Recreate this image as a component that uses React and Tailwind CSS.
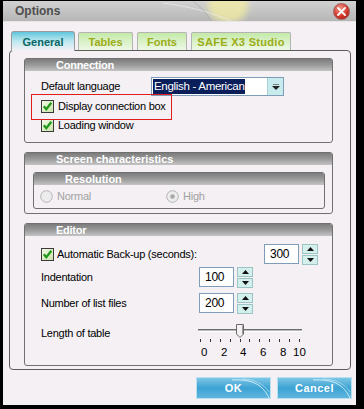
import React from 'react';

const font = { fontFamily: '"Liberation Sans", Arial, sans-serif' };

function CheckBox() {
  return (
    <svg width="13" height="13" viewBox="0 0 13 13" className="shrink-0">
      <defs>
        <linearGradient id="cbg" x1="0" y1="0" x2="1" y2="1">
          <stop offset="0" stopColor="#f4f9e8" />
          <stop offset="1" stopColor="#c9e3a6" />
        </linearGradient>
      </defs>
      <rect x="0.5" y="0.5" width="12" height="12" fill="url(#cbg)" stroke="#3a3a3a" />
      <path d="M2.8 6.2 L5.3 9.2 L10.3 2.8" fill="none" stroke="#1f9a1a" strokeWidth="2.3" />
    </svg>
  );
}

function Radio({ checked }) {
  return (
    <svg width="13" height="13" viewBox="0 0 13 13" className="shrink-0">
      <circle cx="6.5" cy="6.5" r="5.8" fill="#ececec" stroke="#b4b4b4" />
      {checked && <circle cx="6.5" cy="6.5" r="2.2" fill="#a6a6a6" />}
    </svg>
  );
}

function GroupHeader({ children }) {
  return (
    <div className="h-[12px] bg-gradient-to-b from-[#7c7c7c] via-[#9a9a9a] to-[#c4c4c4] pl-[31px] text-[11px] leading-[12px] font-bold text-white">
      {children}
    </div>
  );
}

function Spinner() {
  return (
    <div className="flex flex-col gap-px w-[16px] ml-[3px]">
      <div className="h-[10px] border border-[#9cc4c4] bg-[#d4f0ec] flex items-center justify-center">
        <svg width="7" height="4" viewBox="0 0 7 4"><path d="M0 4 L3.5 0 L7 4 Z" fill="#111" /></svg>
      </div>
      <div className="h-[10px] border border-[#9cc4c4] bg-[#d4f0ec] flex items-center justify-center">
        <svg width="7" height="4" viewBox="0 0 7 4"><path d="M0 0 L7 0 L3.5 4 Z" fill="#111" /></svg>
      </div>
    </div>
  );
}

function NumBox({ value }) {
  return (
    <div className="flex items-center">
      <div className="w-[35px] h-[20px] border border-[#7f9db9] bg-white pl-[5px] text-[12px] leading-[18px] text-black">
        {value}
      </div>
      <Spinner />
    </div>
  );
}

function DialogButton({ label }) {
  return (
    <div className="relative w-[75px] h-[22px] border border-[#b8e0f0] bg-gradient-to-b from-[#7cc6e6] via-[#3aa2d2] to-[#5fb6de] flex items-center justify-center overflow-hidden">
      <svg className="absolute right-0 top-0" width="40" height="22" viewBox="0 0 40 22">
        <path d="M2 2 C20 1 32 5 39 20" fill="none" stroke="#d6f0fa" strokeWidth="1" opacity="0.9" />
        <path d="M12 1 C24 1 34 6 39 14" fill="none" stroke="#ffffff" strokeWidth="0.7" opacity="0.6" />
      </svg>
      <span className="relative text-[11px] font-bold text-white tracking-[0.5px]">{label}</span>
    </div>
  );
}

export default function App() {
  const ticks = [0, 1, 2, 3, 4, 5, 6, 7, 8, 9, 10];
  return (
    <div className="w-[364px] h-[409px] bg-black overflow-hidden pl-[3px] pt-px" style={font}>
      <div className="w-[353px] h-[404px] flex flex-col bg-[#f4f0f4]">
        {/* title bar */}
        <div className="relative h-[21px] shrink-0 bg-gradient-to-b from-[#d2d2d2] to-[#b6b6b6] border-b border-[#e6e6e6] flex items-center overflow-hidden">
          <div className="absolute left-[205px] top-[-14px] w-[40px] h-[36px] rounded-full bg-[#f6f0a0] opacity-70 blur-[3px]" />
          <svg className="absolute left-[160px] top-0" width="90" height="21" viewBox="0 0 90 21">
            <path d="M0 2 C30 6 50 12 70 21" fill="none" stroke="#ececec" strokeWidth="1" opacity="0.7" />
            <path d="M30 0 C40 8 45 14 48 21" fill="none" stroke="#9a9a9a" strokeWidth="0.8" opacity="0.6" />
          </svg>
          <span className="relative ml-[12px] text-[12px] font-bold text-[#4e4e4e]">Options</span>
          <div className="relative ml-auto mr-[6px] w-[17px] h-[17px] rounded-full border border-[#a06060] bg-[radial-gradient(circle_at_40%_30%,#f29a8a,#d2392a_55%,#9e1c14)] flex items-center justify-center">
            <svg width="9" height="9" viewBox="0 0 9 9">
              <path d="M1 1 L8 8 M8 1 L1 8" stroke="#fff" strokeWidth="1.8" strokeLinecap="round" />
            </svg>
          </div>
        </div>

        {/* body */}
        <div className="flex-1 px-[6px] pt-[9px] flex flex-col">
          {/* tabs */}
          <div className="flex items-end h-[19px] ml-[2px] relative z-10">
            <div className="w-[64px] h-[20px] -mb-px rounded-t-[3px] border border-b-0 border-[#9a9a9a] bg-gradient-to-b from-[#5ec6de] via-[#bfe8f0] to-[#f4f0f4] flex items-center justify-center pt-[2px] text-[11px] font-bold text-[#0a6464]">
              General
            </div>
            <div className="ml-[3px] w-[55px] h-[18px] rounded-t-[2px] border border-b-0 border-[#b4b4b4] bg-gradient-to-b from-[#c4eaa8] to-[#eef8e6] flex items-center justify-center pt-[2px] text-[11px] font-bold text-[#9cac16]">
              Tables
            </div>
            <div className="ml-[4px] w-[50px] h-[18px] rounded-t-[2px] border border-b-0 border-[#b4b4b4] bg-gradient-to-b from-[#c4eaa8] to-[#eef8e6] flex items-center justify-center pt-[2px] text-[11px] font-bold text-[#9cac16]">
              Fonts
            </div>
            <div className="ml-[4px] w-[100px] h-[18px] rounded-t-[2px] border border-b-0 border-[#b4b4b4] bg-gradient-to-b from-[#c4eaa8] to-[#eef8e6] flex items-center justify-center pt-[2px] text-[11px] font-bold text-[#9cac16] tracking-[0.3px]">
              SAFE X3 Studio
            </div>
          </div>

          {/* panel */}
          <div className="w-[342px] h-[320px] border border-[#5c5c5c] rounded-[4px] pl-[14px] pt-[7px] flex flex-col">
            {/* Connection */}
            <div className="relative w-[309px] h-[85px] border border-[#707070] rounded-[3px] overflow-visible text-[11px] tracking-[-0.25px] text-black">
              <GroupHeader>Connection</GroupHeader>
              <div className="flex items-center h-[19px] mt-[6px] pl-[16px]">
                <span className="w-[110px]">Default language</span>
                <div className="w-[133px] h-[19px] border border-[#7f9db9] bg-white flex items-center">
                  <span className="ml-px px-px h-[15px] leading-[15px] bg-[#0a1e5a] text-white text-[11.5px] tracking-[-0.3px]">English - American</span>
                  <div className="ml-auto w-[16px] h-[17px] bg-[#c8ecee] border-l border-[#a8d0d4] flex items-center justify-center">
                    <svg width="8" height="6" viewBox="0 0 8 6">
                      <path d="M0 2 L8 2 L4 6 Z" fill="#222" />
                      <path d="M1 0.5 H7" stroke="#666" strokeWidth="0.8" />
                    </svg>
                  </div>
                </div>
              </div>
              <div className="flex items-center gap-[4px] h-[19px] mt-px pl-[16px]">
                <CheckBox />
                <span>Display connection box</span>
              </div>
              <div className="flex items-center gap-[4px] h-[19px] pl-[16px]">
                <CheckBox />
                <span>Loading window</span>
              </div>
              <div className="absolute left-[6px] top-[35px] w-[141px] h-[26px] border border-[#e01c1c]" />
            </div>

            {/* Screen characteristics */}
            <div className="w-[309px] h-[62px] mt-[9px] border border-[#707070] rounded-[3px] overflow-hidden">
              <GroupHeader>Screen characteristics</GroupHeader>
              <div className="ml-[8px] mt-[7px] w-[292px] h-[37px] border border-[#707070] rounded-[3px] overflow-hidden">
                <GroupHeader>Resolution</GroupHeader>
                <div className="flex items-center h-[22px] pl-[6px] text-[11px] tracking-[-0.25px] text-[#a2a2a2]">
                  <div className="flex items-center gap-[4px] w-[126px]">
                    <Radio />
                    <span>Normal</span>
                  </div>
                  <div className="flex items-center gap-[4px]">
                    <Radio checked />
                    <span>High</span>
                  </div>
                </div>
              </div>
            </div>

            {/* Editor */}
            <div className="w-[309px] h-[143px] mt-[9px] border border-[#707070] rounded-[3px] overflow-hidden text-[11px] tracking-[-0.25px] text-black">
              <GroupHeader>Editor</GroupHeader>
              <div className="flex items-center h-[20px] mt-[8px] pl-[16px]">
                <div className="flex items-center gap-[3px] w-[223px]">
                  <CheckBox />
                  <span>Automatic Back-up (seconds):</span>
                </div>
                <NumBox value="300" />
              </div>
              <div className="flex items-center h-[20px] mt-[3px] pl-[16px]">
                <span className="w-[158px]">Indentation</span>
                <NumBox value="100" />
              </div>
              <div className="flex items-center h-[20px] mt-[6px] pl-[16px]">
                <span className="w-[158px]">Number of list files</span>
                <NumBox value="200" />
              </div>
              <div className="flex mt-[11px] pl-[16px]">
                <span className="w-[157px] pt-[1px]">Length of table</span>
                <div className="w-[106px] flex flex-col">
                  <div className="relative h-[14px]">
                    <div className="absolute left-0 right-[2px] top-[5px] h-[3px] border-t border-[#6e6e6e] border-b border-b-[#ffffff] bg-[#b8b8b8]" />
                    <svg className="absolute left-[38px] top-0" width="8" height="14" viewBox="0 0 8 14">
                      <path d="M0.5 0.5 H7.5 V10 L4 13.5 L0.5 10 Z" fill="#f2f2f2" stroke="#6a6a6a" />
                      <path d="M6.5 1.5 V10" stroke="#9a9a9a" />
                    </svg>
                  </div>
                  <div className="flex justify-between w-[102px] pl-[2px] h-[5px] mt-px">
                    {ticks.map((t) => (
                      <div key={t} className="w-px h-[3px] bg-[#333]" />
                    ))}
                  </div>
                  <div className="relative h-[12px] text-[11.5px] leading-[12px] mt-[2px] tracking-normal">
                    <span className="absolute left-[3px]">0</span>
                    <span className="absolute left-[23px]">2</span>
                    <span className="absolute left-[42px]">4</span>
                    <span className="absolute left-[62px]">6</span>
                    <span className="absolute left-[82px]">8</span>
                    <span className="absolute left-[95px]">10</span>
                  </div>
                </div>
              </div>
            </div>
          </div>

          {/* buttons */}
          <div className="flex justify-end gap-[6px] mt-[7px] mr-[-2px]">
            <DialogButton label="OK" />
            <DialogButton label="Cancel" />
          </div>
        </div>
      </div>
    </div>
  );
}
